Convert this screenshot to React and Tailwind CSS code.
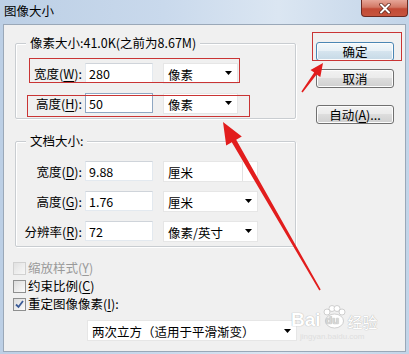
import React from "react";

const Mn = ({ children }) => <span className="underline underline-offset-[2px] decoration-[1px]">{children}</span>;

function Arrow() {
  return (
    <svg width="7" height="4" viewBox="0 0 7 4" className="shrink-0">
      <polygon points="0,0 7,0 3.5,4" fill="#000" />
    </svg>
  );
}

function Select({ text, width, arrow = true, divider = false }) {
  return (
    <div
      className="relative h-[21px] bg-white border border-[#e6e6e6] flex items-center pl-[4px] pr-[5px]"
      style={{ width }}
    >
      <span className="flex-1 text-[12.5px] leading-[17px] pt-[2px]">{text}</span>
      {arrow && <Arrow />}
      {divider && <div className="absolute right-[14px] top-0 bottom-0 w-px bg-[#e2e2e2]" />}
    </div>
  );
}

function Row({ label, mn, value, unit, selectWidth, arrow, divider, focused }) {
  return (
    <div className="flex items-center h-[20px]">
      <div className="w-[66px] text-right text-[12.5px] leading-[17px] whitespace-nowrap">
        {label}(<Mn>{mn}</Mn>):
      </div>
      <div
        className={`ml-[3px] w-[68px] h-[20px] bg-white border flex items-center pl-[3px] text-[12.5px] leading-[17px] ${
          focused ? "border-[#8fa7c2]" : "border-[#e3e9ef] border-t-[#cfd4da]"
        }`}
      >
        {value}
      </div>
      <div className="ml-[10px]">
        <Select text={unit} width={selectWidth} arrow={arrow} divider={divider} />
      </div>
    </div>
  );
}

function Group({ legend, children }) {
  return (
    <div className="relative ml-[2px] w-[281px] border border-[#c9cdd1] rounded-[2px] shadow-[inset_1px_1px_0_#ffffff,1px_1px_0_#ffffff]">
      <div className="absolute left-[10px] -top-[10px] px-[4px] bg-[#f0f0f0] text-[12.5px] leading-[18px] whitespace-nowrap">
        {legend}
      </div>
      <div className="pt-[19px] pb-[5px] flex flex-col gap-[10px]">{children}</div>
    </div>
  );
}

function Check({ label, mn, checked, disabled, colon }) {
  return (
    <div className="flex items-center h-[18px]">
      <div
        className={`w-[13px] h-[13px] border flex items-center justify-center bg-gradient-to-br from-[#dcdcdc] to-[#fbfbfb] ${
          disabled ? "border-[#c4c4c4] opacity-70" : "border-[#8e8f8f]"
        }`}
      >
        {checked && (
          <svg width="9" height="9" viewBox="0 0 9 9">
            <path d="M1 4.5 L3.5 7 L8 1" stroke="#3b5b97" strokeWidth="1.8" fill="none" />
          </svg>
        )}
      </div>
      <span className={`ml-[2px] text-[12.5px] leading-[16px] ${disabled ? "text-[#9a9a9a]" : "text-black"}`}>
        {label}(<Mn>{mn}</Mn>){colon ? ":" : ""}
      </span>
    </div>
  );
}

function Button({ children, primary }) {
  return (
    <div
      className={`w-[78px] h-[19px] rounded-[3px] border flex items-center justify-center text-[12.5px] leading-[16px] shadow-[inset_0_0_0_1px_#fcfcfc] ${
        primary
          ? "border-[#4a86b4] bg-[linear-gradient(#f3f8fb_0%,#e7f0f6_45%,#d5e4ee_50%,#c6d9e6_100%)]"
          : "border-[#707070] bg-[linear-gradient(#f2f2f2_0%,#ebebeb_45%,#dddddd_50%,#cfcfcf_100%)]"
      }`}
    >
      {children}
    </div>
  );
}

export default function App() {
  return (
    <div className="relative w-[409px] h-[354px] overflow-hidden flex flex-col bg-[linear-gradient(90deg,#bccfe5_0%,#c9d9ec_40%,#dbe6f2_68%,#c2d4e8_100%)] font-['Noto_Sans_CJK_SC','Microsoft_YaHei',sans-serif] text-black">
      {/* title bar */}
      <div className="h-[24px] flex items-start">
        <div className="pl-[4px] pt-[3px] text-[12.5px] leading-[16px] text-black">图像大小</div>
        <div className="ml-auto mr-[1px] w-[47px] h-[17px] rounded-b-[4px] border border-t-0 border-[#6b2a22] bg-[linear-gradient(#e6a698_0%,#d27865_45%,#c24a35_55%,#c6553e_100%)] flex items-center justify-center">
          <svg width="12" height="11" viewBox="0 0 12 11">
            <path d="M2 1.5 L10 9.5 M10 1.5 L2 9.5" stroke="#5a2218" strokeWidth="3.4" strokeLinecap="round" />
            <path d="M2 1.5 L10 9.5 M10 1.5 L2 9.5" stroke="#ffffff" strokeWidth="2" strokeLinecap="round" />
          </svg>
        </div>
      </div>

      {/* client area */}
      <div className="mx-[3px] h-[328px] bg-[#f0f0f0] border border-[#9aa8b8] flex">
        <div className="w-[292px] pl-[9px] pt-[18px] flex flex-col">
          <Group legend="像素大小:41.0K(之前为8.67M)">
            <Row label="宽度" mn="W" value="280" unit="像素" selectWidth={75} />
            <Row label="高度" mn="H" value="50" unit="像素" selectWidth={75} focused />
          </Group>
          <div className="mt-[22px]">
            <Group legend="文档大小:">
              <Row label="宽度" mn="D" value="9.88" unit="厘米" selectWidth={95} arrow={false} divider />
              <Row label="高度" mn="G" value="1.76" unit="厘米" selectWidth={95} />
              <Row label="分辨率" mn="R" value="72" unit="像素/英寸" selectWidth={95} />
            </Group>
          </div>
          <div className="mt-[12px] flex flex-col">
            <Check label="缩放样式" mn="Y" disabled />
            <Check label="约束比例" mn="C" />
            <Check label="重定图像像素" mn="I" checked colon />
          </div>
          <div className="mt-[7px] ml-[74px]">
            <Select text="两次立方（适用于平滑渐变）" width={210} />
          </div>
        </div>
        <div className="ml-[20px] pt-[17px] flex flex-col">
          <Button primary>确定</Button>
          <div className="mt-[8px]">
            <Button>取消</Button>
          </div>
          <div className="mt-[17px]">
            <Button>
              自动(<Mn>A</Mn>)...
            </Button>
          </div>
        </div>
      </div>

      {/* annotation boxes */}
      <div className="absolute left-[312px] top-[32px] w-[90px] h-[29px] border border-[#c93434]" />
      <div className="absolute left-[29px] top-[58px] w-[211px] h-[25px] border border-[#c93434]" />
      <div className="absolute left-[27px] top-[95px] w-[223px] h-[22px] border border-[#c93434]" />

      {/* watermark */}
      <div className="absolute left-[291px] top-[305px] flex items-end text-white [text-shadow:0_0_1px_#b8b8b8,0_0_1px_#b8b8b8] pointer-events-none">
        <span className="text-[19px] font-bold leading-none font-['Liberation_Sans',sans-serif]">Bai</span>
        <span className="relative w-[26px] h-[24px]">
          <svg width="26" height="24" viewBox="0 0 26 24" className="absolute left-0 top-0">
            <g fill="#ffffff" stroke="#c4c4c4" strokeWidth="0.8">
              <circle cx="6" cy="7" r="3" />
              <circle cx="11" cy="3.5" r="3" />
              <circle cx="16" cy="3.5" r="3" />
              <circle cx="21" cy="7" r="3" />
              <ellipse cx="13.5" cy="16" rx="9" ry="7" />
            </g>
          </svg>
          <span className="absolute left-[5px] top-[10px] text-[11px] font-bold leading-none text-[#d8d8d8] font-['Liberation_Sans',sans-serif]">du</span>
        </span>
        <span className="text-[15px] leading-none ml-[1px]">经验</span>
      </div>
      <div className="absolute left-[300px] top-[333px] text-[8px] leading-none text-[#dedede] font-['Liberation_Sans',sans-serif]">jingyan.baidu.com</div>

      {/* arrows */}
      <svg className="absolute left-0 top-0 pointer-events-none" width="409" height="354">
        <polygon
          points="223,122 241.8,136.5 236.2,139.7 320.7,289.6 319.3,290.4 231.8,142.3 226.2,145.5"
          fill="#e21d1d"
        />
        <polygon
          points="323,63 320.3,77 316.6,74.4 302.6,92.4 301.4,91.6 314.2,72.6 310.5,70"
          fill="#e21d1d"
        />
      </svg>
    </div>
  );
}
